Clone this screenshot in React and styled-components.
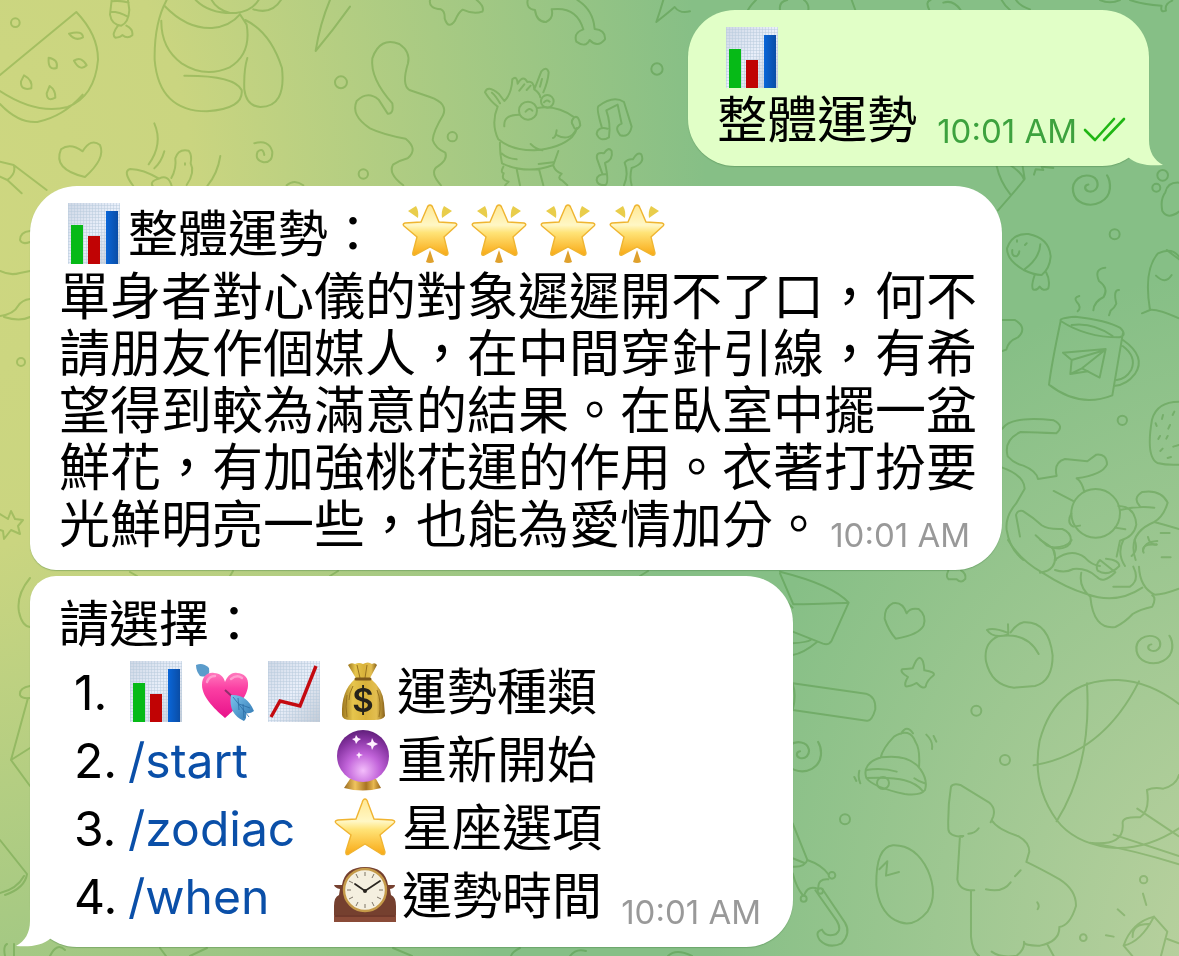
import React from "react";
import styled, { createGlobalStyle, css } from "styled-components";

const GlobalStyle = createGlobalStyle`
  *, *::before, *::after { box-sizing: border-box; }
  body {
    margin: 0;
    font-family: Inter, "Noto Sans CJK TC", sans-serif;
    color: #000;
  }
`;

const Chat = styled.main`
  position: relative;
  min-height: 100vh;
  padding: 10px 30px 8px;
  display: flex;
  flex-direction: column;
  align-items: flex-start;
  overflow: hidden;
  background:
    radial-gradient(ellipse 46% 72% at 106% 100%, #bdd2a0 0%, #bdd2a000 100%),
    radial-gradient(ellipse 64% 112% at -4% 22%, #ced780 0%, #cad580 32%, #cad58000 100%),
    #86bf86;
`;

const Wallpaper = styled.svg`
  position: absolute;
  inset: 0;
  width: 100%;
  height: 100%;
  fill: none;
  stroke: #cee4c2;
  stroke-linecap: round;
  stroke-linejoin: round;
  mix-blend-mode: multiply;
`;

const Bubble = styled.article`
  position: relative;
  max-width: 972px;
  padding: 14px 25px 17px 29px;
  font-size: 50px;
  line-height: 57px;
  background: #fff;
  border-radius: 47px 47px 47px 26px;
  box-shadow: 0 1px 1px #3c783c59;

  ${(p) =>
    p.$outgoing &&
    css`
      align-self: flex-end;
      padding-right: 22px;
      margin-bottom: 20px;
      background: #e1ffc7;
      border-radius: 47px;
    `}

  ${(p) =>
    p.$last &&
    css`
      margin-top: 6px;
      border-radius: 26px 47px 47px 47px;
    `}
`;

const Tail = styled.svg`
  position: absolute;
  bottom: 0;
  width: 40px;
  height: 50px;
  ${(p) => (p.$left ? "left: -14px; transform: scaleX(-1); fill: #fff;" : "right: -14px; fill: #e1ffc7;")}
`;

const Row = styled.div`
  display: flex;
  align-items: center;
  height: 68px;
`;

const TextRow = styled.div`
  display: flex;
  align-items: flex-end;
`;

const Paragraph = styled.p`
  margin: 0;
  display: flow-root;
  font-size: 51px;
`;

const Stars = styled.span`
  display: flex;
  margin-left: 17px;
`;

const Emoji = styled.span`
  flex: none;
  display: flex;
  justify-content: center;
  width: ${(p) => (p.$wide ? "74px" : "69px")};
  svg { width: 64px; height: 64px; display: block; }
`;

const Time = styled.time`
  flex: none;
  font-size: 33px;
  line-height: 36px;
  color: ${(p) => (p.$outgoing ? "#3da23e" : "#999")};
  margin: ${(p) => (p.$outgoing ? "0 6px 0 20px" : "0 7px 0 auto")};
  align-self: flex-end;
`;

const FloatingTime = styled(Time)`
  float: right;
  margin-top: 21px;
`;

const Checks = styled.svg`
  flex: none;
  width: 44px;
  height: 36px;
`;

const Menu = styled.ol`
  list-style: none;
  margin: 0;
  padding: 0;
`;

const MenuRow = styled.li`
  display: flex;
  align-items: center;
  height: 68px;
  padding-left: 15px;
  min-width: 709px;
`;

const Number = styled.span`
  flex: none;
  width: 47px;
  font-size: 48px;
`;

const Lead = styled.span`
  flex: none;
  display: flex;
  width: 207px;
`;

const Command = styled.a`
  padding-left: 7px;
  font-size: 48px;
  color: #0a4fa8;
  text-decoration: none;
`;

function Paper({ id }) {
  return (
    <>
      <defs>
        <linearGradient id={id + "p"} x1="0" y1="0" x2="1" y2="1">
          <stop offset="0" stopColor="#cfd8e6" />
          <stop offset=".5" stopColor="#e9effa" />
          <stop offset="1" stopColor="#c3cbd6" />
        </linearGradient>
        <pattern id={id + "g"} width="3" height="3" patternUnits="userSpaceOnUse">
          <path d="M0 .5H3M.5 0V3" stroke="#b9cbdd" strokeWidth=".5" />
        </pattern>
      </defs>
      <rect x="6" y="1" width="52" height="61" fill={`url(#${id}p)`} />
      <rect x="6" y="1" width="52" height="61" fill={`url(#${id}g)`} />
    </>
  );
}

const BarChart = ({ id }) => (
  <svg viewBox="0 0 64 64" role="img" aria-label="bar chart">
    <Paper id={id} />
    <defs>
      <linearGradient id={id + "b"} x1="0" x2="1">
        <stop offset="0" stopColor="#0a66d8" />
        <stop offset="1" stopColor="#0a4da6" />
      </linearGradient>
    </defs>
    <rect x="9" y="23" width="12" height="39" fill="#06ba17" />
    <rect x="26" y="34" width="12" height="28" fill="#c00304" />
    <rect x="44" y="9" width="12" height="53" fill={`url(#${id}b)`} />
  </svg>
);

const LineChart = () => (
  <svg viewBox="0 0 64 64" role="img" aria-label="rising chart">
    <Paper id="line" />
    <path d="M9 57 L18 41 L38 46 L54 6" fill="none" stroke="#c40a10" strokeWidth="3.4" />
  </svg>
);

const HeartArrow = () => (
  <svg viewBox="0 0 64 64" role="img" aria-label="heart with arrow">
    <defs>
      <linearGradient id="heart" x1="0" y1="0" x2="0" y2="1">
        <stop offset="0" stopColor="#ff79bd" />
        <stop offset=".35" stopColor="#fb3fa3" />
        <stop offset="1" stopColor="#e8128a" />
      </linearGradient>
      <linearGradient id="feather" x1="0" y1="0" x2="1" y2="1">
        <stop offset="0" stopColor="#7cc4ef" />
        <stop offset="1" stopColor="#2b73ae" />
      </linearGradient>
    </defs>
    <path d="M8 11 L14 17" stroke="#4b87b4" strokeWidth="2" />
    <path d="M3 5 Q10 2 16 8 Q17 12 15 16 Q11 17 7 16 Q3 11 3 5Z" fill="#5b9ccb" />
    <path d="M32 58 C24 51 9 38 9 25 C9 16 15 12 21 13 C27 13 31 17 32 22 C34 17 38 12 44 13 C51 13 56 18 55 26 C54 39 40 51 32 58Z" fill="url(#heart)" />
    <path d="M14 22 Q16 16 22 16 M38 19 Q44 14 49 18" stroke="#ffb3da" strokeWidth="2.4" fill="none" opacity=".7" strokeLinecap="round" />
    <path d="M32 30 L44 41" stroke="#8e2f6b" strokeWidth="2" />
    <path d="M38 35 Q54 34 61 51 Q57 54 53 53 Q54 58 51 61 Q35 54 38 35Z" fill="url(#feather)" />
    <path d="M40 37 L56 57 M45 38 L46 50 M50 44 L51 58 M46 44 L57 48" stroke="#2a6ba3" strokeWidth=".8" />
  </svg>
);

const MoneyBag = () => (
  <svg viewBox="0 0 64 64" role="img" aria-label="money bag">
    <defs>
      <linearGradient id="bag" x1="0" x2="1">
        <stop offset="0" stopColor="#9a741d" />
        <stop offset=".25" stopColor="#e6c54d" />
        <stop offset=".55" stopColor="#d9b23a" />
        <stop offset=".8" stopColor="#e3be50" />
        <stop offset="1" stopColor="#87601a" />
      </linearGradient>
    </defs>
    <path d="M17 5 Q20 2 24 4 Q28 2 32 4 Q37 1 41 4 Q44 2 46 5 L38 20 H26Z" fill="url(#bag)" />
    <path d="M24 19 H40 Q52 29 53 43 L54 56 Q52 60 43 60 H20 Q11 60 11 55 Q10 31 24 19Z" fill="url(#bag)" />
    <path d="M26 5 L29 18 M36 5 L34 18 M16 35 Q14 47 16 57 M22 26 Q18 33 18 40 M46 30 Q51 42 48 57" stroke="#98731f" strokeWidth="1" fill="none" />
    <path d="M25 19 H39" stroke="#7e591b" strokeWidth="3" strokeLinecap="round" />
    <text x="32" y="52" textAnchor="middle" fontFamily="Inter, sans-serif" fontSize="33" fontWeight="600" fill="#25231b">$</text>
  </svg>
);

const CrystalBall = () => (
  <svg viewBox="0 0 64 64" role="img" aria-label="crystal ball">
    <defs>
      <radialGradient id="ball" cx=".5" cy=".78" r=".8">
        <stop offset="0" stopColor="#f3bdfb" />
        <stop offset=".4" stopColor="#c264da" />
        <stop offset=".75" stopColor="#8734a2" />
        <stop offset="1" stopColor="#5c1c76" />
      </radialGradient>
      <linearGradient id="base" x1="0" x2="1">
        <stop offset="0" stopColor="#98691e" />
        <stop offset=".3" stopColor="#f0c45e" />
        <stop offset=".6" stopColor="#a97424" />
        <stop offset=".8" stopColor="#e9b950" />
        <stop offset="1" stopColor="#956316" />
      </linearGradient>
    </defs>
    <path d="M19 51 H45 L50 60 Q32 65 13 60Z" fill="url(#base)" />
    <circle cx="32" cy="28" r="26" fill="url(#ball)" />
    <path d="M25 7 l2 3 3 1 -3 2 -2 3 -1 -3 -3 -2 3 -1Z M41 10 l2 4 4 2 -4 2 -2 4 -1 -4 -5 -2 5 -2Z M28 24 l1 2 3 1 -3 1 -1 3 -1 -3 -2 -1 2 -1Z" fill="#fff0ff" />
  </svg>
);

const StarGradient = ({ id }) => (
  <defs>
    <linearGradient id={id} x1="0" y1="0" x2="0" y2="1">
      <stop offset="0" stopColor="#ffe894" />
      <stop offset=".4" stopColor="#fff7c5" />
      <stop offset=".55" stopColor="#ffe377" />
      <stop offset="1" stopColor="#f9a915" />
    </linearGradient>
  </defs>
);

const GlowingStar = ({ id }) => (
  <svg viewBox="0 0 64 64" role="img" aria-label="glowing star">
    <StarGradient id={id} />
    <path d="M32 3 Q34 3 35 6 L41 20 L57 21 Q60 22 58 24 L46 35 L50 51 Q50 54 47 53 L32 45 L17 53 Q14 54 15 50 L19 35 L6 24 Q4 22 7 21 L23 20 L29 6 Q30 3 32 3Z" fill={`url(#${id})`} stroke="#efb531" strokeWidth="1.4" />
    <path d="M10 9 L18 4 Q21 9 20 16Z M54 9 L46 4 Q43 9 44 16Z" fill="#e9cd4b" />
    <path d="M32 48 L36 60 Q32 62 28 60Z" fill="#dfa12c" />
  </svg>
);

const Star = () => (
  <svg viewBox="0 0 64 64" role="img" aria-label="star">
    <StarGradient id="star" />
    <path d="M32 3 Q34 3 35 7 L41 23 L59 24 Q64 25 60 28 L47 39 L52 56 Q52 60 48 58 L32 48 L16 58 Q12 60 13 55 L18 39 L4 28 Q0 25 5 24 L23 23 L29 7 Q30 3 32 3Z" fill="url(#star)" stroke="#f0b431" strokeWidth="1.4" />
  </svg>
);

const MantelClock = () => (
  <svg viewBox="0 0 64 64" role="img" aria-label="mantelpiece clock">
    <path d="M1 21 H9 Q12 3 32 3 Q52 3 55 21 H62 Q62 24 57 25 L58 31 Q63 33 63 42 V52 H1 V42 Q1 33 6 31 L7 25 Q2 24 1 21Z" fill="#75402f" />
    <path d="M1 51 H63 V58 H1Z" fill="#8a4b38" />
    <path d="M2 52 H62" stroke="#54291e" strokeWidth="1.2" fill="none" />
    <circle cx="32" cy="26" r="21" fill="#f4efdf" stroke="#c59a49" strokeWidth="2.4" />
    <path d="M32 8 V12 M32 40 V44 M14 26 H18 M46 26 H50 M23 10 L25 14 M41 10 L39 14 M16 17 L20 19 M16 35 L20 33 M48 35 L44 33 M23 42 L25 38 M41 42 L39 38" stroke="#7c7467" strokeWidth="1" />
    <path d="M22 20 L32 27 L47 17" stroke="#29251f" strokeWidth="1.8" fill="none" strokeLinecap="round" />
    <circle cx="32" cy="27" r="2" fill="#29251f" />
  </svg>
);

const spiral = "M0 -4 C-7 -3 -8 6 0 9 C10 12 18 3 16 -8 C13 -22 -6 -26 -18 -16 C-33 -3 -29 24 -10 32 C12 41 36 27 38 4 C39 -9 36 -17 33 -22";

const Doodles = () => (
  <Wallpaper viewBox="0 0 1179 956" preserveAspectRatio="xMinYMin slice" aria-hidden="true">
    {/* upper left: watermelon, candy, penguin, heart, butterfly */}
    <g transform="scale(.3333)" strokeWidth="6">
      <circle cx="46" cy="68" r="13" />
      <circle cx="1023" cy="247" r="18" />
      <path d="M0 225 L229 36 Q295 105 294 180 Q284 290 203 321 Q110 345 0 273 M0 312 Q55 370 112 366 Q190 350 248 284" />
      <path d="M207 101 Q248 90 249 112 Q225 125 207 101Z M146 173 Q176 178 170 204 Q143 213 146 173Z M222 182 Q244 167 260 196 Q240 215 222 182Z M72 226 Q99 240 94 265 Q61 273 63 244Z M149 258 Q167 270 166 293 Q141 307 140 280Z" />
      <path d="M335 0 L330 44 Q335 75 364 77 Q386 67 388 30 L384 0 M335 4 Q360 0 386 8 M332 35 Q360 35 383 50 M354 77 Q333 104 346 113 Q362 112 367 105 Q382 118 397 106 Q400 87 379 77" />
      <path d="M500 0 Q462 70 464 180 Q477 334 621 334 Q732 326 725 270 Q704 226 553 227 M494 18 Q560 87 636 84 Q690 79 720 43 M484 62 Q483 145 545 190 Q614 235 689 202 Q755 162 740 74 L720 43 M587 0 Q630 43 708 39 Q755 34 776 0 M635 0 Q650 28 690 39 M760 28 Q815 45 843 0 M736 60 Q812 97 846 204 Q859 321 781 321 Q739 318 733 268 Q731 210 742 174" />
      <path d="M990 0 Q960 70 947 153 Q1000 90 1050 20" />
      <path d="M248 454 Q211 427 183 448 Q157 508 255 531 Q318 475 300 435 Q273 413 248 454Z" />
      <path d="M463 370 Q490 432 446 493 M493 454 Q484 487 463 505 M661 468 Q653 520 622 558 M400 558 Q366 513 391 507 Q430 508 477 536 Q505 522 515 558 M477 536 Q447 544 459 560 M514 534 Q530 505 526 475 Q535 445 566 452 Q577 466 572 490 Q586 518 560 555 M555 490v4" />
      <path d="M763 430 Q807 418 817 455 Q818 489 791 487 Q763 480 773 455 Q789 441 793 465 M860 556 Q883 536 910 556" />
      <path d="M0 485 L41 495 L140 570 M41 495 Q50 520 22 540 L65 580 M22 540 L0 530" />
    </g>
    {/* upper middle: squiggle, star, bone, llama, notes */}
    <g transform="translate(340 0) scale(.3333)" strokeWidth="6">
      <path d="M270 0 Q265 25 303 28 Q315 33 314 55 Q325 90 345 62 Q356 36 368 29 Q400 44 427 35 Q435 20 410 0" />
      <path d="M563 0 Q558 27 585 30 Q590 66 618 66 Q642 55 635 28 Q710 18 730 88 Q700 98 709 125 Q737 145 749 120 Q772 145 795 118 Q797 90 764 87 Q760 30 712 0" />
      <path d="M970 0 Q960 35 949 66 Q985 38 1004 21 Q1020 42 1050 34" />
      <circle cx="951" cy="207" r="17" /><circle cx="337" cy="410" r="14" /><circle cx="70" cy="522" r="14" />
      <path d="M190 556 Q143 520 159 494 Q177 482 203 475 Q236 448 197 416 Q130 404 90 385 Q31 346 50 303 Q83 271 116 299 L143 341 Q162 343 157 310 Q90 235 97 175 Q120 109 178 132 Q212 155 204 190 Q184 255 208 270 L270 291 Q325 310 309 346 Q280 394 278 420 Q286 445 316 458 Q325 480 289 502 Q270 520 303 556" />
      <path d="M473 320 Q452 370 475 418 Q515 452 583 451 Q660 445 696 411 Q707 400 711 384 M473 320 Q451 304 435 277 Q442 253 476 281 L493 303 Q515 282 517 238 Q531 225 533 251 Q550 223 562 246 Q581 241 583 268 Q600 280 601 292 M583 268 L604 214 Q620 197 626 217 Q624 245 610 277 M538 272 L553 253 M560 270 L572 257 M480 310 Q468 288 456 278 M600 260 L606 237" />
      <circle cx="564" cy="332" r="27" /><circle cx="622" cy="304" r="19" />
      <path d="M557 335 Q568 321 577 332 M612 307 Q620 297 629 305 M538 344 Q490 344 493 379 M592 324 Q650 314 703 352 Q717 345 721 376 Q707 400 699 375 Q691 366 701 354 M650 391 Q647 413 639 414 M647 404 Q690 428 710 386 M572 432 Q588 448 607 451 M480 428 Q479 460 486 490 Q560 525 640 495 L655 453 M484 460 Q500 476 530 478 M596 492 L640 487 M490 500 Q480 518 491 520 Q482 540 506 545 Q488 560 500 560 M530 507 L540 556 M597 507 L610 556 M640 497 Q646 515 665 521 Q650 535 666 541 L682 556" />
      <path d="M803 386 Q772 379 770 402 Q780 428 807 412 Q813 370 799 331 L833 314 L845 371 Q820 381 841 406 Q868 414 875 380 L852 306 Q820 285 775 319 Q769 326 785 380 M798 523 Q770 522 770 540 Q773 558 797 555 Q808 546 795 489 Q820 480 815 453 Q805 439 792 460 Q767 455 771 476 L787 521 M852 556 Q867 521 854 488 Q863 476 879 478 Q892 454 904 463 Q917 490 875 504 Q868 530 875 556" />
    </g>
    {/* top edge above the first message */}
    <g transform="translate(650 0) scale(.3333)" strokeWidth="6">
      <path d="M318 0 Q300 18 294 30 M390 30 Q386 5 412 0 M475 30 Q478 12 462 0 M605 0 L616 30 M838 30 Q825 5 842 0 M880 8 Q910 -2 932 30 M1055 0 Q1065 18 1080 30 M1098 0 Q1110 18 1140 28 M1350 0 Q1380 14 1410 0 M1440 0 Q1480 14 1535 17 Q1530 40 1548 32 Q1543 12 1567 2" />
    </g>
    {/* right column: candy, mug, kiwi, cat */}
    <g transform="translate(990 160) scale(.3333)" strokeWidth="6">
      <path d="M20 18 Q30 65 61 103 M60 15 Q98 40 102 60 M98 20 L104 57 Q80 88 24 151 M132 44 L137 28 L160 30 L155 20 L190 24" />
      <g transform="translate(295 80) scale(1.7 1.55)" strokeWidth="4"><path d={spiral} /></g>
      <circle cx="374" cy="223" r="15" /><circle cx="397" cy="781" r="14" /><circle cx="518" cy="46" r="16" /><circle cx="499" cy="83" r="12" />
      <path d="M567 68 Q533 66 526 97 Q510 118 517 153 Q533 180 567 155" />
      <path d="M101 330 Q50 300 51 265 Q67 219 115 222 Q178 234 182 290 Q179 326 155 345 Q130 344 101 330 Q150 294 151 253 M81 241v4 M110 250 l-5 5 M67 270 Q64 290 80 289 Q88 282 88 274 M134 345 Q122 381 130 389 Q141 392 149 380 Q160 396 175 385 Q181 360 169 338" />
      <path d="M346 323 Q311 326 327 363 Q357 384 341 411 Q312 425 310 451 M268 408 Q249 413 261 427 Q276 442 263 454 M387 390 Q369 389 379 431 Q373 445 362 452 L357 466" />
      <path d="M212 483 Q206 474 256 470 Q350 480 391 504 Q412 525 389 532 Q290 533 212 483 Q185 610 177 674 Q267 745 367 706 L399 518 M245 495 Q308 486 368 528 M399 540 Q470 590 435 642 Q410 675 376 677 M398 558 Q441 590 424 629 Q408 657 380 660 M219 578 L347 567 L329 653 L276 625 L345 570 L245 600 L219 578 M245 600 L241 642 L276 625 M241 642 L294 634" />
      <path d="M567 475 Q500 446 480 450 L456 460 M480 450 Q460 330 504 280 Q545 260 567 290 M530 270 L567 298 M498 347 Q526 375 545 345" />
      <path d="M37 480 H74 Q114 503 84 532 Q54 543 49 569 L37 573" />
      <path d="M567 725 Q500 725 486 779 Q467 890 502 909 Q530 916 567 914 M519 765 l-3 12 M553 755 l-5 10 M497 790 l3 8 M540 795 l-5 11 M505 837 l5 -9 M533 828 l-4 8 M550 860 l17 -5 M511 873 l7 -7 M533 894 l10 -3" />
      <path d="M37 806 Q63 767 191 781 Q225 798 199 820 Q140 817 92 816 Q40 840 53 889 Q72 910 100 917 Q139 933 144 957 L200 948 Q190 907 225 897 L292 904 L319 884 Q350 881 351 913 Q338 944 260 955 Q275 964 283 995 M37 923 Q103 947 104 986 L78 1031 Q45 1070 50 1110 Q60 1170 100 1200 M191 993 L249 1023" />
      <circle cx="317" cy="1060" r="73" />
      <path d="M244 1060 Q229 1089 250 1100 L270 1097 M90 1130 L78 1065 Q82 1050 98 1053 Q130 1073 155 1096 Q174 1109 217 1107 Q250 1121 240 1151 Q218 1177 170 1156 L137 1126 M188 1162 L198 1200 M385 1038 Q435 1039 439 1094 Q432 1131 390 1142 L380 1190 M390 1050 Q440 1037 493 1043 M375 1103 L406 1108 M449 1038 Q427 1014 457 996 Q513 987 533 1028 Q522 1068 493 1086 Q410 1120 437 1200 M493 1086 Q530 1096 567 1107 M459 1174 Q461 1146 502 1143 M474 1131 Q480 1157 500 1153 M512 1119 h27" />
    </g>
    {/* lower right: letter, fruit, ball, bell, tree, umbrella */}
    <g transform="translate(780 540) scale(.3333)" strokeWidth="6">
      <path d="M684 0 Q720 60 787 98 Q860 145 920 162 Q1010 195 1087 143 M780 98 Q833 91 824 40 Q826 25 781 0 M815 22 Q860 24 875 0 M824 60 Q873 22 914 52 Q935 75 960 78 M825 90 Q855 100 880 87 Q920 83 950 110 Q970 133 1006 97 L960 60 Q945 75 953 92 Q985 112 1018 78 Q1018 60 978 56 M904 98 Q895 140 931 170 Q940 270 1006 261 Q1035 247 1058 222 Q1080 208 1117 200 Q1130 174 1117 166 M1077 80 Q1080 143 1124 164 Q1150 164 1197 146 M1060 80 Q1080 120 1050 140 H1000 M1064 0 Q1076 30 1055 48 M1091 38 Q1080 10 1130 14 M1145 52 h27 M1030 0 Q1010 40 1035 78" />
      <path d="M0 100 L40 193 Q170 190 206 188 Q160 135 0 95 M206 188 L155 302 Q146 317 129 311 L38 275 M38 203 Q18 185 0 155 M38 345 Q70 340 111 306 M38 310 Q80 307 92 300" />
      <path d="M505 92 Q496 111 506 118 H530 Q544 132 556 117 Q559 100 543 91" />
      <path d="M380 220 Q368 184 338 190 Q314 201 314 236 Q325 271 347 296 Q418 284 431 256 Q440 226 416 207 Q390 202 380 220Z M419 353 Q431 355 433 391 Q467 396 461 406 Q439 423 437 440 Q429 449 410 429 Q389 441 377 439 Q372 430 384 411 Q359 396 366 388 Q390 387 398 385 Q410 353 419 353Z" />
      <path d="M684 253 L685 283 Q640 298 621 270 Q640 262 682 278 M654 289 Q610 309 618 364 Q634 436 702 443 L765 438 Q818 425 818 346 Q806 243 731 247 Q710 251 692 277 M654 289 Q741 274 776 342" />
      <g transform="translate(1114 319) scale(1.65 1.45)" strokeWidth="4"><path d={spiral} /></g>
      <g transform="translate(60 640) scale(1.65 1.55)" strokeWidth="4"><path d={spiral} /></g>
      <circle cx="589" cy="512" r="15" /><circle cx="675" cy="660" r="15" /><circle cx="195" cy="838" r="15" /><circle cx="1091" cy="1019" r="11" /><circle cx="910" cy="1193" r="10" />
      <path d="M38 430 L258 461 Q288 470 286 508 Q275 546 260 542 L38 510 Q50 468 38 430" />
      <path d="M1197 492 Q1110 425 1015 420 Q830 415 779 602 Q754 735 830 840 Q880 906 982 922 Q1090 935 1197 865 M921 430 Q936 675 830 844 M761 676 Q970 640 1077 424 M930 908 Q1060 930 1197 973 M930 908 Q1035 920 1028 850 Q1026 829 1080 832 Q1111 813 1101 750 Q1120 741 1150 746 Q1190 735 1197 705 M1072 806 L1197 889 M1001 884 L1197 948" />
      <path d="M302 653 Q308 625 342 590 Q390 560 407 607 Q421 628 417 683 M363 581 Q380 552 399 580 M259 714 Q245 670 304 652 Q389 641 422 689 Q444 721 435 750 Q422 768 374 762 Q280 742 259 714 Q342 711 374 721 Q410 731 427 752 M259 690 Q308 683 350 695 M403 715 Q415 724 434 730" />
      <circle cx="309" cy="729" r="18" />
      <path d="M439 584 Q460 604 456 627 M461 588 l8 17 M238 692 q-5 20 3 38 M223 711 l6 12" />
      <path d="M547 890 Q506 889 505 867 Q503 800 513 740 Q520 729 541 735 L629 789 Q647 805 640 829 L632 847 M550 888 H540 L532 1018 Q538 1053 583 1051 H573 V1190 Q577 1235 597 1248 M635 841 Q653 869 716 889 Q748 907 748 935 L739 966 Q775 983 839 1018 Q889 1050 888 1098 Q870 1157 838 1161 Q840 1205 780 1217 Q732 1218 732 1205 Q735 1229 710 1247 Q662 1255 635 1235 M565 881 q20 0 31 -16 M618 1048 Q668 1060 692 1027 M705 1009 l17 -18 M772 1087 q8 11 1 21 M803 1215 l18 33" />
      <path d="M289 1036 Q287 921 339 916 Q406 914 443 990 Q475 1063 443 1114 Q397 1170 344 1140 Q296 1111 289 1036 M298 988 L322 964 L318 1007 L357 996" />
      <path d="M38 850 L82 960 Q75 982 38 980 M82 960 Q126 975 145 1003 M38 955 L75 970 M145 1018 Q113 1015 115 1047 Q83 1035 73 1065 M38 1000 Q50 1045 68 1065 M106 1051 L170 1142 Q187 1170 167 1183 Q137 1193 126 1169 Q103 1175 119 1200 Q146 1228 185 1210 Q214 1180 195 1148 L127 1047" />
      <circle cx="156" cy="1006" r="10" /><circle cx="71" cy="1076" r="9" /><circle cx="121" cy="1053" r="8" />
      <path d="M1089 1061 l10 34 M1013 1108 l20 18 M978 1186 l23 4 M1122 1130 Q1055 1147 1031 1217 Q1083 1206 1122 1130 L1162 1175 L1143 1248 M1031 1217 L1057 1248 M1058 1191 Q1056 1150 1110 1152 M1162 1197 L1197 1210" />
    </g>
    {/* left edge */}
    <g strokeWidth="2">
      <path d="M30 231 Q20 232 20 240 Q22 245 30 242 M0 271 Q10 276 20 273 L30 271 M0 316 Q14 314 18 306 Q22 300 30 299 M4 317 Q20 322 30 317 M0 514 L8 519 L11 511 L15 519 L23 520 L18 526 L20 534 L11 530 L4 539 L3 531 L0 530" />
      <circle cx="21" cy="362" r="4" />
      <path d="M30 578 Q16 595 19 612 Q22 626 30 627 M30 686 Q19 688 20 695 Q22 699 30 698 M28 698 L11 760 L30 786 M11 760 L30 748 M0 840 L27 874 Q25 888 5 895 M24 876 Q17 889 0 893" />
      <path d="M5 956 Q3 946 7 944 M14 944 V956 M50 956 Q57 942 65 950 M160 948 L166 956 M190 956 L207 948 M393 948 L412 956 M520 948 Q512 952 511 956 M570 956 Q576 948 586 951 M668 956 Q676 948 692 956" />
      <path d="M130 572 L137 576 M230 576 L233 571 M330 576 L338 571 M640 576 L648 571" />
    </g>
  </Wallpaper>
);

export default function App() {
  return (
    <>
      <GlobalStyle />
      <Chat>
        <Doodles />
        <Bubble $outgoing>
          <Row><Emoji><BarChart id="sent" /></Emoji></Row>
          <TextRow>
            <span>整體運勢</span>
            <Time $outgoing dateTime="10:01">10:01 AM</Time>
            <Checks viewBox="0 0 44 36" role="img" aria-label="read">
              <path d="M2 17 L12 27 L31 6 M21 27 L41 6" fill="none" stroke="#20b614" strokeWidth="2.6" strokeLinecap="round" strokeLinejoin="round" />
            </Checks>
          </TextRow>
          <Tail viewBox="0 0 40 50" aria-hidden="true">
            <path d="M26 0 V24 C26 36 31 44 40 49 C26 50 14 49 5 41 L0 30 Z" />
          </Tail>
        </Bubble>

        <Bubble>
          <Row>
            <Emoji><BarChart id="overall" /></Emoji>
            <span>整體運勢：</span>
            <Stars>
              {["s1", "s2", "s3", "s4"].map((id) => (
                <Emoji key={id}><GlowingStar id={id} /></Emoji>
              ))}
            </Stars>
          </Row>
          <Paragraph>
            單身者對心儀的對象遲遲開不了口，何不請朋友作個媒人，在中間穿針引線，有希望得到較為滿意的結果。在臥室中擺一盆鮮花，有加強桃花運的作用。衣著打扮要光鮮明亮一些，也能為愛情加分。
            <FloatingTime dateTime="10:01">10:01 AM</FloatingTime>
          </Paragraph>
        </Bubble>

        <Bubble $last>
          <Row>請選擇：</Row>
          <Menu>
            <MenuRow>
              <Number>1.</Number>
              <Lead>
                <Emoji><BarChart id="kinds" /></Emoji>
                <Emoji><HeartArrow /></Emoji>
                <Emoji><LineChart /></Emoji>
              </Lead>
              <Emoji><MoneyBag /></Emoji>
              <span>運勢種類</span>
            </MenuRow>
            <MenuRow>
              <Number>2.</Number>
              <Lead><Command href="#start">/start</Command></Lead>
              <Emoji><CrystalBall /></Emoji>
              <span>重新開始</span>
            </MenuRow>
            <MenuRow>
              <Number>3.</Number>
              <Lead><Command href="#zodiac">/zodiac</Command></Lead>
              <Emoji $wide><Star /></Emoji>
              <span>星座選項</span>
            </MenuRow>
            <MenuRow>
              <Number>4.</Number>
              <Lead><Command href="#when">/when</Command></Lead>
              <Emoji $wide><MantelClock /></Emoji>
              <span>運勢時間</span>
              <Time dateTime="10:01">10:01 AM</Time>
            </MenuRow>
          </Menu>
          <Tail $left viewBox="0 0 40 50" aria-hidden="true">
            <path d="M26 0 V24 C26 36 31 44 40 49 C26 50 14 49 5 41 L0 30 Z" />
          </Tail>
        </Bubble>
      </Chat>
    </>
  );
}
